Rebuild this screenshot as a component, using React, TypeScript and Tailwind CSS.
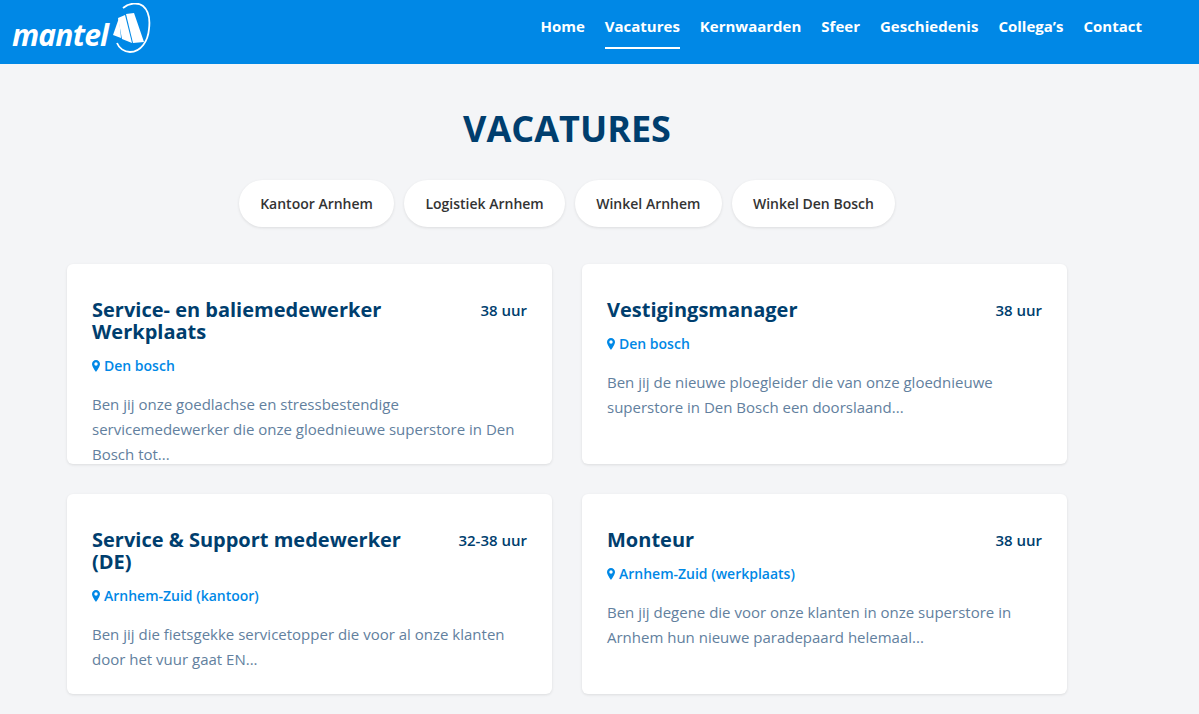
const font = { fontFamily: '"Open Sans", sans-serif' }

const links = ['Home', 'Vacatures', 'Kernwaarden', 'Sfeer', 'Geschiedenis', 'Collega’s', 'Contact']
const filters = ['Kantoor Arnhem', 'Logistiek Arnhem', 'Winkel Arnhem', 'Winkel Den Bosch']

const jobs = [
  {
    title: 'Service- en baliemedewerker Werkplaats',
    hours: '38 uur',
    place: 'Den bosch',
    text: 'Ben jij onze goedlachse en stressbestendige servicemedewerker die onze gloednieuwe superstore in Den Bosch tot...',
  },
  {
    title: 'Vestigingsmanager',
    hours: '38 uur',
    place: 'Den bosch',
    text: 'Ben jij de nieuwe ploegleider die van onze gloednieuwe superstore in Den Bosch een doorslaand...',
  },
  {
    title: 'Service & Support medewerker (DE)',
    hours: '32-38 uur',
    place: 'Arnhem-Zuid (kantoor)',
    text: 'Ben jij die fietsgekke servicetopper die voor al onze klanten door het vuur gaat EN...',
  },
  {
    title: 'Monteur',
    hours: '38 uur',
    place: 'Arnhem-Zuid (werkplaats)',
    text: 'Ben jij degene die voor onze klanten in onze superstore in Arnhem hun nieuwe paradepaard helemaal...',
  },
]

function Logo() {
  return (
    <div className="flex items-center">
      <span className="mt-[6px] text-[30px] leading-none font-bold text-white italic tracking-[-0.8px]">mantel</span>
      <svg className="-mt-[8px] ml-[3px] h-[50px] w-[40px]" viewBox="0 0 40 50" fill="none">
        <path
          d="M12 5C18 0 27-1 32 3c6 5 7 15 6 23-1 12-8 23-19 23-6 0-11-4-13-9"
          stroke="#fff"
          strokeWidth="1.800"
        />
        <path d="M2 32 8 15l2 20z" fill="#fff" />
        <path d="M7 15 14 12l7 28-10-4z" fill="#fff" />
        <path d="M15 11l8-1 10 29-11 1z" fill="#fff" />
      </svg>
    </div>
  )
}

function Card({ job }: { job: (typeof jobs)[number] }) {
  return (
    <div className="h-[200px] overflow-hidden rounded-md bg-white px-[25px] pt-[35px] shadow-[0_1px_3px_rgba(0,0,0,0.1)]">
      <div className="flex items-start justify-between">
        <h3 className="w-[325px] text-[20px] leading-[22px] font-bold text-[#003e6e]">{job.title}</h3>
        <span className="text-[15px] leading-[22px] font-semibold text-[#003e6e]">{job.hours}</span>
      </div>
      <div className="mt-[12px] flex items-center gap-[4px] text-[14px] leading-[22px] font-semibold text-[#0088e6]">
        <svg className="h-[12px] w-[8px]" viewBox="0 0 8 12">
          <path
            fillRule="evenodd"
            fill="#0088e6"
            d="M4 0C1.800 0 0 1.800 0 4c0 2.600 2.900 6.400 4 8 1.100-1.600 4-5.400 4-8 0-2.200-1.800-4-4-4zm0 2.300a1.700 1.700 0 1 1 0 3.400 1.700 1.700 0 0 1 0-3.400z"
          />
        </svg>
        {job.place}
      </div>
      <p className="mt-[15px] text-[15px] leading-[25px] text-[#62809e]">{job.text}</p>
    </div>
  )
}

export default function App() {
  return (
    <div className="min-h-[714px] overflow-hidden bg-[#f4f5f7]" style={font}>
      <header className="flex h-[64px] items-center justify-between bg-[#0088e6] pr-[57px] pl-[12px]">
        <Logo />
        <nav className="flex h-full gap-[20px]">
          {links.map((link) => (
            <a
              key={link}
              className={`flex h-[49px] items-center border-b-2 pt-[5px] text-[15px] font-bold text-white ${
                link === 'Vacatures' ? 'border-white' : 'border-transparent'
              }`}
            >
              {link}
            </a>
          ))}
        </nav>
      </header>

      <main className="w-[1134px]">
        <h1 className="mt-[42px] text-center text-[36px] leading-[46px] font-bold text-[#003e6e]">VACATURES</h1>
        <div className="mt-[28px] flex justify-center gap-[10px]">
          {filters.map((filter) => (
            <button
              key={filter}
              className="h-[47px] rounded-full bg-white px-[21.25px] text-[14px] font-semibold text-[#333333] shadow-[0_1px_3px_rgba(0,0,0,0.1)]"
            >
              {filter}
            </button>
          ))}
        </div>
        <div className="mx-auto mt-[37px] grid w-[1000px] grid-cols-2 gap-[30px]">
          {jobs.map((job) => (
            <Card key={job.title} job={job} />
          ))}
        </div>
      </main>
    </div>
  )
}
